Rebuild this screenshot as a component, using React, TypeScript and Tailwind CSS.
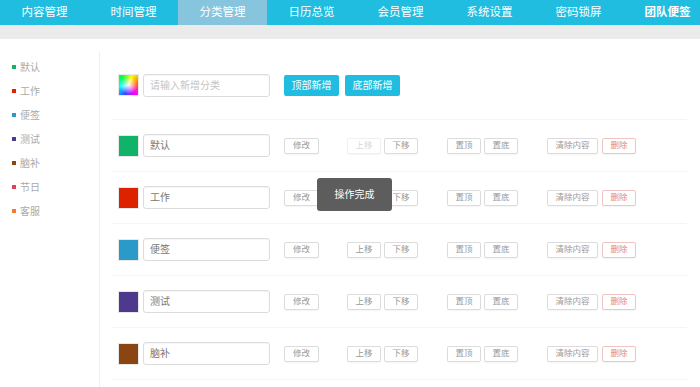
import React from 'react';

type Category = {
  name: string;
  color: string;
};

const tabs = ['内容管理', '时间管理', '分类管理', '日历总览', '会员管理', '系统设置', '密码锁屏', '团队便签'];

const sideItems: Category[] = [
  { name: '默认', color: '#10b368' },
  { name: '工作', color: '#dd2200' },
  { name: '便签', color: '#2b9ac9' },
  { name: '测试', color: '#4e3a8c' },
  { name: '脑补', color: '#8b4513' },
  { name: '节日', color: '#e0405c' },
  { name: '客服', color: '#f57a30' }
];

const rows = sideItems.slice(0, 5);

const SmallButton: React.FC<{
  label: string;
  className?: string;
  disabled?: boolean;
  danger?: boolean;
}> = ({ label, className = '', disabled = false, danger = false }) => {
  const tone = danger
    ? 'border-[#f1c4c4] text-[#e88484]'
    : disabled
      ? 'border-[#f0f0f0] text-[#dadada]'
      : 'border-[#dcdcdc] text-[#999]';
  return (
    <button
      className={`h-[16px] flex items-center justify-center border rounded-[2px] bg-white text-[8.5px] leading-none shadow-[0_1px_1px_rgba(0,0,0,0.04)] ${tone} ${className}`}
    >
      {label}
    </button>
  );
};

const CategoryRow: React.FC<{ item: Category; first: boolean }> = ({ item, first }) => (
  <div className="h-[52px] flex items-center border-b border-[#f4f4f4]">
    <div
      className="ml-[6px] w-[21px] h-[22px] border border-[#e8e8e8]"
      style={{ backgroundColor: item.color }}
    />
    <div className="ml-[4px] w-[127px] h-[23px] flex items-center pl-[6px] border border-[#dcdcdc] rounded-[3px] text-[10px] text-[#777] shadow-[inset_0_1px_1px_rgba(0,0,0,0.04)]">
      {item.name}
    </div>
    <SmallButton label="修改" className="ml-[14px] w-[35px]" />
    <SmallButton label="上移" className="ml-[28px] w-[34px]" disabled={first} />
    <SmallButton label="下移" className="ml-[3px] w-[34px]" />
    <SmallButton label="置顶" className="ml-[29px] w-[34px]" />
    <SmallButton label="置底" className="ml-[3px] w-[34px]" />
    <SmallButton label="清除内容" className="ml-[29px] w-[51px]" />
    <SmallButton label="删除" className="ml-[4px] w-[34px]" danger />
  </div>
);

export default function App() {
  return (
    <div className="relative w-[700px] h-[387px] overflow-hidden bg-white font-['Liberation_Sans','Noto_Sans_CJK_SC',sans-serif]">
      {/* Top nav */}
      <div className="h-[25px] flex bg-[#20bde0]">
        {tabs.map((t, i) => (
          <div
            key={t}
            className={`w-[89px] shrink-0 flex items-center justify-center text-[11.5px] text-white ${
              i === 2 ? 'bg-[#87c5df]' : ''
            } ${i === 7 ? 'font-bold' : ''}`}
          >
            {t}
          </div>
        ))}
      </div>
      <div className="h-[14px] bg-[#ebebeb]" />

      <div className="flex pt-[13px] h-[348px]">
        {/* Sidebar */}
        <div className="w-[100px] shrink-0 border-r border-[#efefef] pt-[3px]">
          {sideItems.map(s => (
            <div key={s.name} className="h-[24px] flex items-center pl-[12px]">
              <span className="w-[4px] h-[4px]" style={{ backgroundColor: s.color }} />
              <span className="ml-[4px] text-[10px] text-[#aaa]">{s.name}</span>
            </div>
          ))}
        </div>

        {/* Main */}
        <div className="w-[575px] ml-[12px]">
          <div className="h-[68px] flex items-center border-b border-[#f4f4f4] pb-[1px]">
            <div className="ml-[6px] w-[21px] h-[22px] border border-[#e8e8e8] bg-[image:radial-gradient(circle,#ffffff_0%,rgba(255,255,255,0)_65%),conic-gradient(from_20deg,#ffff00,#ff6a00,#ff00ff,#3344ff,#00ffff,#00ff44,#ffff00)]" />
            <div className="ml-[4px] w-[127px] h-[23px] flex items-center pl-[6px] border border-[#dcdcdc] rounded-[3px] text-[10px] text-[#c4c4c4] shadow-[inset_0_1px_1px_rgba(0,0,0,0.04)]">
              请输入新增分类
            </div>
            <button className="ml-[14px] w-[55px] h-[21px] rounded-[2px] bg-[#20bde0] text-white text-[10px]">
              顶部新增
            </button>
            <button className="ml-[6px] w-[55px] h-[21px] rounded-[2px] bg-[#20bde0] text-white text-[10px]">
              底部新增
            </button>
          </div>
          {rows.map((r, i) => (
            <CategoryRow key={r.name} item={r} first={i === 0} />
          ))}
        </div>
      </div>

      {/* Toast */}
      <div className="absolute left-[317px] top-[178px] w-[75px] h-[33px] rounded-[3px] bg-[#5d5d5d] flex items-center justify-center text-white text-[10px]">
        操作完成
      </div>
    </div>
  );
}
